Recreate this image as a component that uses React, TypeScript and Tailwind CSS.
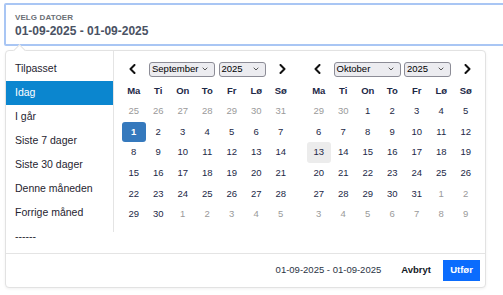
import React from "react";

type Day = { n: number; out?: boolean; sel?: boolean; hl?: boolean };

const r = (a: number, b: number, out = false): Day[] => {
  const res: Day[] = [];
  for (let i = a; i <= b; i++) res.push({ n: i, out });
  return res;
};

const sepDays: Day[] = [
  ...r(25, 31, true),
  { n: 1, sel: true },
  ...r(2, 30),
  ...r(1, 5, true),
];

const octDays: Day[] = [
  ...r(29, 30, true),
  ...r(1, 12),
  { n: 13, hl: true },
  ...r(14, 31),
  ...r(1, 9, true),
];

const heads = ["Ma", "Ti", "On", "To", "Fr", "Lø", "Sø"];

function Chevron({ dir }: { dir: "l" | "r" }) {
  return (
    <svg width="7" height="10" viewBox="0 0 7 10" className="block">
      <polyline
        points={dir === "l" ? "5.5,1 1.5,5 5.5,9" : "1.5,1 5.5,5 1.5,9"}
        fill="none"
        stroke="#111"
        strokeWidth="2"
        strokeLinecap="round"
        strokeLinejoin="round"
      />
    </svg>
  );
}

function Select({ label, w }: { label: string; w: string }) {
  return (
    <div
      className={`${w} h-[15px] flex items-center justify-between pl-[2px] pr-[6px] bg-[#ececf0] border border-[#8c8c96] rounded-[3px] text-[9.5px] leading-none text-black`}
    >
      <span>{label}</span>
      <svg width="6" height="4" viewBox="0 0 6 4" className="block">
        <polyline points="0.7,0.7 3,3 5.3,0.7" fill="none" stroke="#555" strokeWidth="1" />
      </svg>
    </div>
  );
}

function Calendar({ month, days, monthW }: { month: string; days: Day[]; monthW: string }) {
  return (
    <div className="w-[171.5px]">
      <div className="h-[17px] flex items-center justify-between">
        <div className="w-[22px] flex justify-center">
          <Chevron dir="l" />
        </div>
        <div className="flex gap-[3.5px]">
          <Select label={month} w={monthW} />
          <Select label="2025" w="w-[47px]" />
        </div>
        <div className="w-[22px] flex justify-center">
          <Chevron dir="r" />
        </div>
      </div>
      <div className="mt-[3px] grid grid-cols-7">
        {heads.map((h) => (
          <div key={h} className="h-[20.6px] flex items-center justify-center text-[9.5px] font-bold text-[#1c2846]">
            {h}
          </div>
        ))}
        {days.map((d, i) => (
          <div
            key={i}
            className={`h-[20.6px] flex items-center justify-center text-[9.5px] rounded-[3px] ${
              d.sel
                ? "bg-[#3579bd] text-white font-bold"
                : d.hl
                ? "bg-[#ececec] text-[#1c2846]"
                : d.out
                ? "text-[#9a9a9a]"
                : "text-[#1c2846]"
            }`}
          >
            {d.n}
          </div>
        ))}
      </div>
    </div>
  );
}

const presets = [
  "Tilpasset",
  "Idag",
  "I går",
  "Siste 7 dager",
  "Siste 30 dager",
  "Denne måneden",
  "Forrige måned",
  "------",
];

export default function App() {
  return (
    <div className="w-[503px] h-[295px] bg-white overflow-hidden font-['Liberation_Sans',Arial,sans-serif]">
      <div className="pt-[3px] pl-[4px]">
        <div className="w-[520px] h-[43px] border-2 border-[#a9c6f4] rounded-[2px] pl-[9px] pt-[8px]">
          <div className="text-[8px] leading-[10px] font-bold text-[#6b6f76] tracking-[0.1px]">VELG DATOER</div>
          <div className="mt-[1px] text-[12px] leading-[15px] font-bold text-[#4a5263]">01-09-2025 - 01-09-2025</div>
        </div>
      </div>
      <div className="relative ml-[5px] mt-[4px] w-[481px] h-[238px] border border-[#e2e2e2] rounded-[4px] bg-white shadow-[0_1px_3px_rgba(0,0,0,0.06)] flex flex-col">
        <div className="absolute left-[9px] top-[-5px] w-[9px] h-[9px] rotate-45 bg-white border-l border-t border-[#e2e2e2]" />
        <div className="flex h-[202px]">
          <div className="w-[107px] pt-[6px]">
            {presets.map((p) => (
              <div
                key={p}
                className={`h-[24px] flex items-center pl-[9px] text-[10.5px] ${
                  p === "Idag" ? "bg-[#0b86cf] text-white" : "text-[#1f2430]"
                }`}
              >
                {p}
              </div>
            ))}
          </div>
          <div className="self-start h-[181px] border-l border-[#e4e4e4] pl-[7.5px] pt-[9.5px] flex gap-[13.5px]">
            <Calendar month="September" days={sepDays} monthW="w-[66px]" />
            <Calendar month="Oktober" days={octDays} monthW="w-[67px]" />
          </div>
        </div>
        <div className="flex-1 border-t border-[#e4e4e4] flex items-center justify-end pr-[5px]">
          <span className="text-[9.5px] text-[#2b3444]">01-09-2025 - 01-09-2025</span>
          <span className="ml-[20px] text-[9.5px] font-bold text-[#141a26]">Avbryt</span>
          <button className="ml-[12px] w-[37px] h-[21px] bg-[#0b6cfd] text-white text-[9.5px] font-bold flex items-center justify-center">
            Utfør
          </button>
        </div>
      </div>
    </div>
  );
}
